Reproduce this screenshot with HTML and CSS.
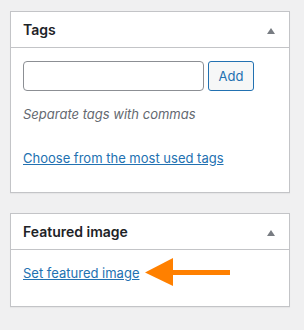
FILE: index.html
```html
<!DOCTYPE html>
<html lang="en">
<head>
  <meta charset="UTF-8">
  <title>Post sidebar</title>
  <link rel="stylesheet" href="styles.css">
</head>
<body>
  <div class="postbox">
    <div class="postbox-header">
      <h2>Tags</h2>
      <span class="toggle"></span>
    </div>
    <div class="inside tags-inside">
      <div class="tag-add">
        <input type="text" class="tag-input">
        <button class="button">Add</button>
      </div>
      <p class="howto">Separate tags with commas</p>
      <p class="most-used"><a href="#">Choose from the most used tags</a></p>
    </div>
  </div>

  <div class="postbox">
    <div class="postbox-header">
      <h2>Featured image</h2>
      <span class="toggle"></span>
    </div>
    <div class="inside image-inside">
      <p class="set-image"><a href="#">Set featured image</a></p>
      <svg class="pointer" width="86" height="28" viewBox="0 0 86 28">
        <polygon points="0,14.5 28,0 28,28" fill="#ff8000"/>
        <rect x="26" y="12" width="59" height="5" fill="#ff8000"/>
      </svg>
    </div>
  </div>
</body>
</html>
```

FILE: styles.css
```css
body {
  margin: 0;
  padding: 11px 14px 0 10px;
  background: #f0f0f1;
  font-family: Inter, "Liberation Sans", sans-serif;
  color: #1d2327;
  font-size: 13px;
}
.postbox {
  width: 278px;
  background: #fff;
  border: 1px solid #c3c4c7;
  box-shadow: 0 1px 1px rgba(0, 0, 0, 0.04);
  margin-bottom: 20px;
}
.postbox-header {
  display: flex;
  align-items: center;
  justify-content: space-between;
  height: 35px;
  padding: 0 14px 0 12px;
  border-bottom: 1px solid #c3c4c7;
}
.postbox-header h2 {
  margin: 0;
  font-size: 14px;
  font-weight: 600;
  line-height: 20px;
}
.toggle {
  width: 0;
  height: 0;
  margin-top: 3px;
  border-left: 4px solid transparent;
  border-right: 4px solid transparent;
  border-bottom: 6px solid #787c82;
}
.inside {
  position: relative;
  padding: 13px 12px 24px;
}
.image-inside {
  padding-bottom: 23px;
}
.tag-add {
  display: flex;
  gap: 4px;
}
.tag-input {
  box-sizing: border-box;
  width: 181px;
  height: 30px;
  margin: 0;
  border: 1px solid #8c8f94;
  border-radius: 4px;
  background: #fff;
}
.button {
  box-sizing: border-box;
  width: 46px;
  height: 30px;
  padding: 0;
  border: 1px solid #2271b1;
  border-radius: 3px;
  background: #f6f7f7;
  color: #2271b1;
  font-family: inherit;
  font-size: 13px;
}
p {
  margin: 0;
  line-height: 20px;
}
.howto {
  margin-top: 13px;
  color: #646970;
  font-style: italic;
}
.most-used {
  margin-top: 24px;
}
a {
  color: #2271b1;
  text-decoration: underline;
}
.pointer {
  position: absolute;
  left: 134px;
  top: 8px;
}
```
